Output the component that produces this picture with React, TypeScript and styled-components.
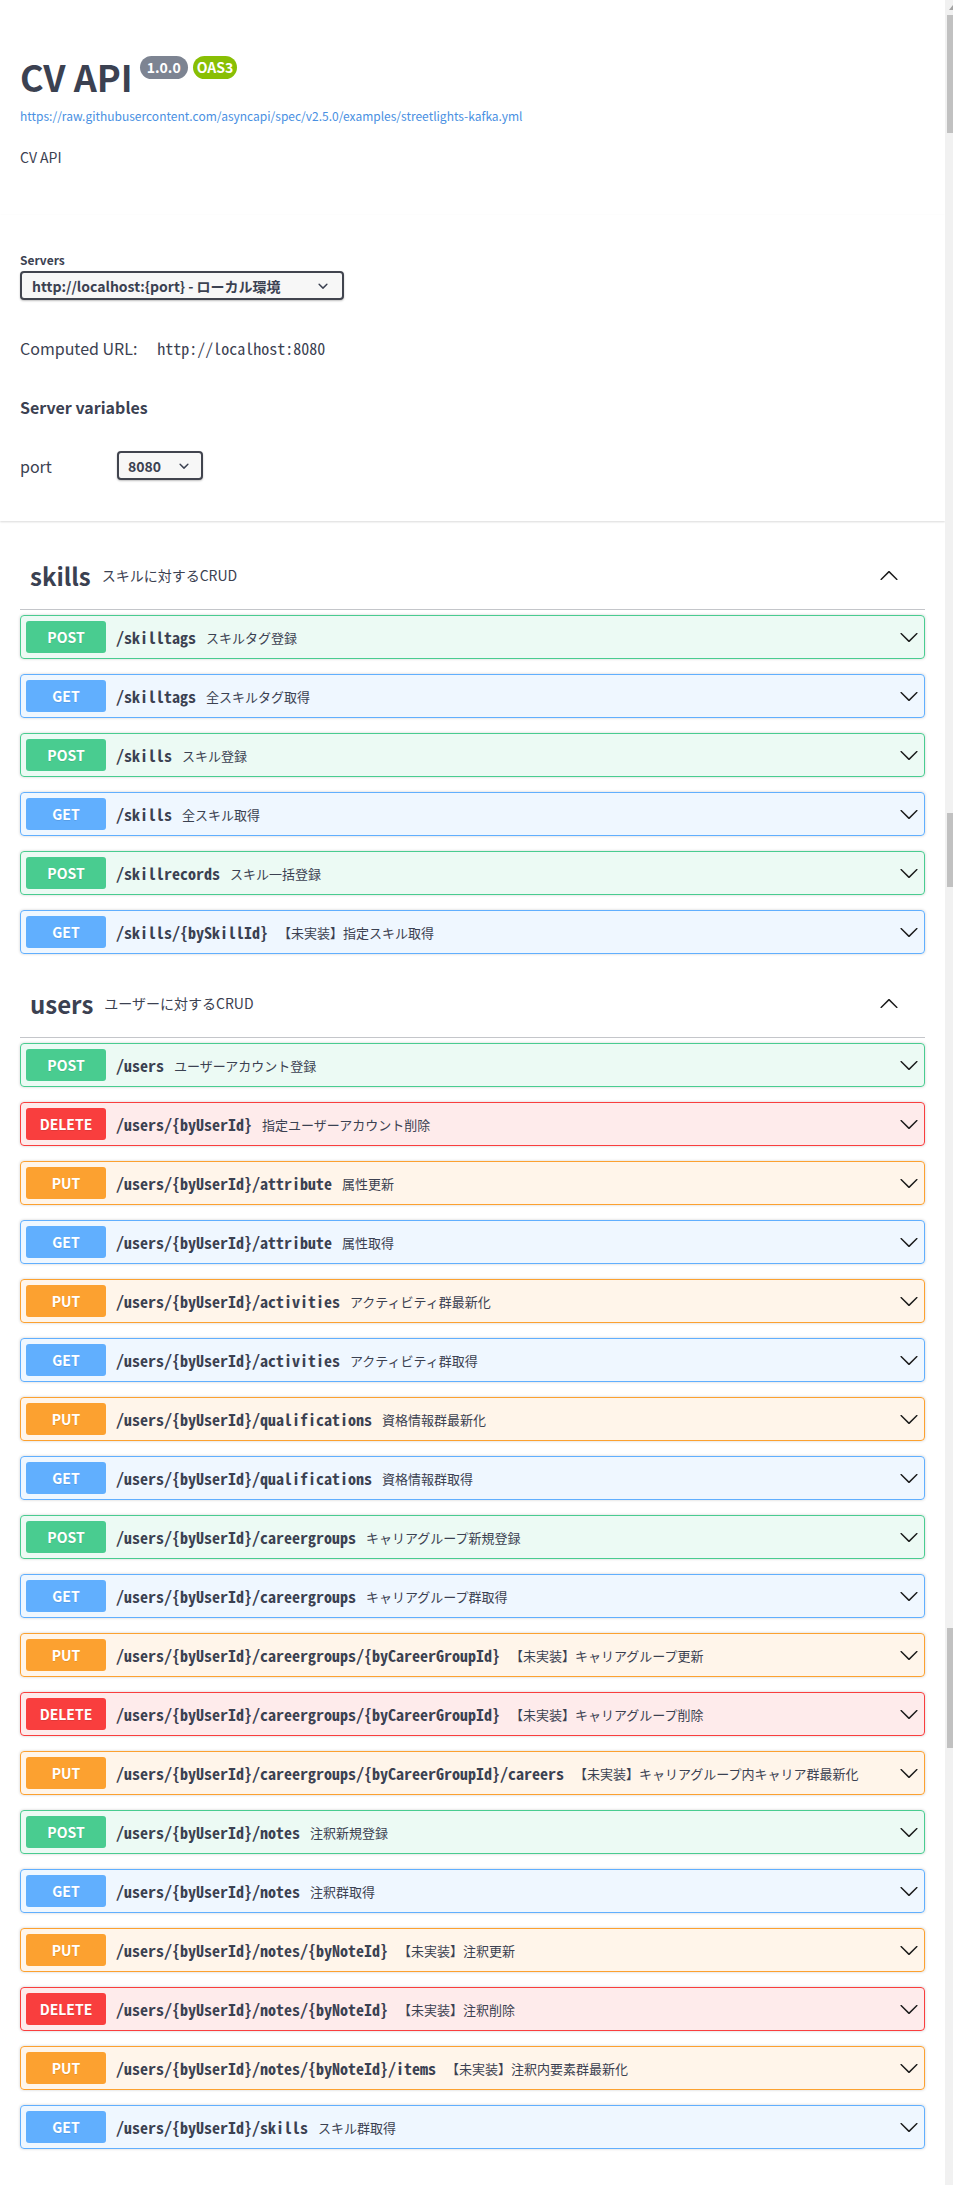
import * as React from "react";
import styled, { createGlobalStyle } from "styled-components";

const GlobalStyle = createGlobalStyle`
  html, body {
    margin: 0;
    padding: 0;
    background: #fff;
  }
  body {
    font-family: "Noto Sans CJK JP", "Noto Sans", sans-serif;
    color: #3b4151;
  }
  * {
    box-sizing: border-box;
  }
`;

const mono = `"Noto Sans Mono CJK JP", "DejaVu Sans Mono", monospace`;

const methodColors: Record<string, string> = {
  POST: "73, 204, 144",
  GET: "97, 175, 254",
  PUT: "252, 161, 48",
  DELETE: "249, 62, 62",
};

const Page = styled.div`
  display: flex;
  min-height: 2185px;
`;

const Main = styled.main`
  flex: 1;
  min-width: 0;
`;

const ScrollTrack = styled.div`
  flex: none;
  width: 8px;
  background: #f1f1f1;
  display: flex;
  flex-direction: column;
  align-items: flex-end;
`;

const ScrollArrow = styled.div`
  margin: 5px 0 0;
  width: 0;
  height: 0;
  border-left: 4px solid transparent;
  border-bottom: 5px solid #a3a3a3;
`;

const ScrollThumb = styled.div<{ $gap: number; $size: number }>`
  width: 6px;
  margin-top: ${props => props.$gap}px;
  height: ${props => props.$size}px;
  background: #c1c1c1;
`;

const Wrapper = styled.div`
  padding: 0 20px;
`;

const Info = styled.div`
  margin: 50px 0 48px;
`;

const TitleRow = styled.div`
  display: flex;
  align-items: flex-start;
`;

const Title = styled.h2`
  margin: 0;
  font-size: 36px;
  font-weight: 700;
  line-height: 52px;
  color: #3b4151;
`;

const Badge = styled.span<{ $bg: string; $gap: number; $pad: number }>`
  margin: 6px 0 0 ${props => props.$gap}px;
  height: 23px;
  padding: 0 ${props => props.$pad}px;
  border-radius: 57px;
  background: ${props => props.$bg};
  color: #fff;
  font-size: 14px;
  font-weight: 700;
  line-height: 23px;
`;

const SpecLink = styled.a`
  display: block;
  margin-top: 5px;
  font-size: 12px;
  line-height: 17px;
  color: #4990e2;
  text-decoration: none;
`;

const Description = styled.p`
  margin: 23px 0 0;
  font-size: 14px;
  line-height: 20px;
`;

const SchemeContainer = styled.section`
  background: #fff;
  box-shadow: 0 1px 2px 0 rgba(0, 0, 0, 0.15);
  padding: 36px 0 41px;
`;

const ServersLabel = styled.span`
  display: block;
  font-size: 12px;
  font-weight: 700;
  line-height: 17px;
`;

const SelectBox = styled.div<{ $width: number; $left: number; $right: number }>`
  display: flex;
  align-items: center;
  justify-content: space-between;
  width: ${props => props.$width}px;
  height: 29px;
  padding: 0 ${props => props.$right}px 0 ${props => props.$left}px;
  border: 2px solid #41444e;
  border-radius: 4px;
  background: #f7f7f7;
  box-shadow: 0 1px 2px 0 rgba(0, 0, 0, 0.25);
  font-size: 14px;
  font-weight: 700;
  color: #3b4151;
  white-space: nowrap;
`;

const ServerSelect = styled(SelectBox)`
  margin-top: 3px;
`;

const ComputedRow = styled.div`
  display: flex;
  align-items: baseline;
  gap: 20px;
  margin-top: 36px;
  font-size: 16px;
  line-height: 24px;
`;

const Code = styled.code`
  font-family: ${mono};
  font-size: 16px;
`;

const VarsTitle = styled.h4`
  margin: 36px 0 0;
  font-size: 16px;
  font-weight: 700;
  line-height: 23px;
`;

const VarRow = styled.div`
  display: flex;
  align-items: center;
  margin-top: 32px;
  height: 29px;
`;

const VarName = styled.span`
  width: 97px;
  font-size: 16px;
`;

const Operations = styled.div`
  margin-top: 20px;
  padding: 0 20px;
`;

const TagHeader = styled.div`
  display: flex;
  align-items: center;
  height: 69px;
  padding: 0 26px 0 10px;
  margin-bottom: 5px;
  border-bottom: 1px solid rgba(59, 65, 81, 0.3);
`;

const TagName = styled.h3`
  margin: 0;
  font-size: 24px;
  font-weight: 700;
  line-height: 35px;
  color: #3b4151;
`;

const TagDesc = styled.small`
  flex: 1;
  padding-left: 11px;
  font-size: 14px;
  line-height: 20px;
`;

const Opblock = styled.div<{ $rgb: string }>`
  display: flex;
  align-items: center;
  height: 44px;
  padding: 0 5px;
  margin-bottom: 15px;
  border: 1px solid rgb(${props => props.$rgb});
  border-radius: 4px;
  background: rgba(${props => props.$rgb}, 0.1);
  box-shadow: 0 0 3px rgba(0, 0, 0, 0.19);
`;

const Method = styled.span<{ $rgb: string }>`
  flex: none;
  min-width: 80px;
  height: 32px;
  border-radius: 3px;
  background: rgb(${props => props.$rgb});
  color: #fff;
  font-size: 14px;
  font-weight: 700;
  line-height: 32px;
  text-align: center;
  text-shadow: 0 1px 0 rgba(0, 0, 0, 0.1);
`;

const Path = styled.span`
  padding: 0 10px;
  font-family: ${mono};
  font-size: 16px;
  font-weight: 700;
  color: #3b4151;
  white-space: nowrap;
`;

const OpDesc = styled.span`
  flex: 1;
  font-size: 13px;
  color: #3b4151;
  white-space: nowrap;
`;

const Arrow = styled.svg`
  flex: none;
  width: 20px;
  height: 20px;
  fill: #1b1b1b;
`;

const SmallChevron = () => (
  <svg width="20" height="20" viewBox="0 0 20 20" fill="#3b4151">
    <path d="M13.418 7.859a.695.695 0 01.978 0 .68.68 0 010 .969l-3.908 3.83a.697.697 0 01-.979 0l-3.908-3.830a.68.68 0 010-.969.695.695 0 01.978 0L10 11l3.418-3.141z" />
  </svg>
);

const ArrowDown = () => (
  <Arrow viewBox="0 0 20 20">
    <path d="M17.418 6.109c.272-.268.709-.268.979 0s.271.701 0 .969l-7.908 7.830c-.27.268-.707.268-.979 0l-7.908-7.830c-.27-.268-.27-.701 0-.969.271-.268.709-.268.979 0L10 13.25l7.418-7.141z" />
  </Arrow>
);

const ArrowUp = () => (
  <Arrow viewBox="0 0 20 20">
    <path d="M17.418 14.908c.272.268.709.268.979 0s.271-.701 0-.969l-7.908-7.830c-.27-.268-.707-.268-.979 0l-7.908 7.830c-.27.268-.27.701 0 .969.271.268.709.268.979 0L10 7.767l7.418 7.141z" />
  </Arrow>
);

type Op = [string, string, string];

const tags: { name: string; desc: string; ops: Op[] }[] = [
  {
    name: "skills",
    desc: "スキルに対するCRUD",
    ops: [
      ["POST", "/skilltags", "スキルタグ登録"],
      ["GET", "/skilltags", "全スキルタグ取得"],
      ["POST", "/skills", "スキル登録"],
      ["GET", "/skills", "全スキル取得"],
      ["POST", "/skillrecords", "スキル一括登録"],
      ["GET", "/skills/{bySkillId}", "【未実装】指定スキル取得"],
    ],
  },
  {
    name: "users",
    desc: "ユーザーに対するCRUD",
    ops: [
      ["POST", "/users", "ユーザーアカウント登録"],
      ["DELETE", "/users/{byUserId}", "指定ユーザーアカウント削除"],
      ["PUT", "/users/{byUserId}/attribute", "属性更新"],
      ["GET", "/users/{byUserId}/attribute", "属性取得"],
      ["PUT", "/users/{byUserId}/activities", "アクティビティ群最新化"],
      ["GET", "/users/{byUserId}/activities", "アクティビティ群取得"],
      ["PUT", "/users/{byUserId}/qualifications", "資格情報群最新化"],
      ["GET", "/users/{byUserId}/qualifications", "資格情報群取得"],
      ["POST", "/users/{byUserId}/careergroups", "キャリアグループ新規登録"],
      ["GET", "/users/{byUserId}/careergroups", "キャリアグループ群取得"],
      ["PUT", "/users/{byUserId}/careergroups/{byCareerGroupId}", "【未実装】キャリアグループ更新"],
      ["DELETE", "/users/{byUserId}/careergroups/{byCareerGroupId}", "【未実装】キャリアグループ削除"],
      ["PUT", "/users/{byUserId}/careergroups/{byCareerGroupId}/careers", "【未実装】キャリアグループ内キャリア群最新化"],
      ["POST", "/users/{byUserId}/notes", "注釈新規登録"],
      ["GET", "/users/{byUserId}/notes", "注釈群取得"],
      ["PUT", "/users/{byUserId}/notes/{byNoteId}", "【未実装】注釈更新"],
      ["DELETE", "/users/{byUserId}/notes/{byNoteId}", "【未実装】注釈削除"],
      ["PUT", "/users/{byUserId}/notes/{byNoteId}/items", "【未実装】注釈内要素群最新化"],
      ["GET", "/users/{byUserId}/skills", "スキル群取得"],
    ],
  },
];

export default function App() {
  return (
    <Page>
      <GlobalStyle />
      <Main>
        <Wrapper>
          <Info>
            <TitleRow>
              <Title>CV API</Title>
              <Badge $bg="#7d8492" $gap={7} $pad={7}>1.0.0</Badge>
              <Badge $bg="#89bf04" $gap={5} $pad={4}>OAS3</Badge>
            </TitleRow>
            <SpecLink href="#">
              https://raw.githubusercontent.com/asyncapi/spec/v2.5.0/examples/streetlights-kafka.yml
            </SpecLink>
            <Description>CV API</Description>
          </Info>
        </Wrapper>

        <SchemeContainer>
          <Wrapper>
            <ServersLabel>Servers</ServersLabel>
            <ServerSelect $width={324} $left={10} $right={9}>
              <span>http://localhost:{"{port}"} - ローカル環境</span>
              <SmallChevron />
            </ServerSelect>
            <ComputedRow>
              <span>Computed URL:</span>
              <Code>http://localhost:8080</Code>
            </ComputedRow>
            <VarsTitle>Server variables</VarsTitle>
            <VarRow>
              <VarName>port</VarName>
              <SelectBox $width={86} $left={9} $right={7}>
                <span>8080</span>
                <SmallChevron />
              </SelectBox>
            </VarRow>
          </Wrapper>
        </SchemeContainer>

        <Operations>
          {tags.map(tag => (
            <section key={tag.name}>
              <TagHeader>
                <TagName>{tag.name}</TagName>
                <TagDesc>{tag.desc}</TagDesc>
                <ArrowUp />
              </TagHeader>
              {tag.ops.map(([method, path, desc]) => (
                <Opblock key={method + path} $rgb={methodColors[method]}>
                  <Method $rgb={methodColors[method]}>{method}</Method>
                  <Path>{path}</Path>
                  <OpDesc>{desc}</OpDesc>
                  <ArrowDown />
                </Opblock>
              ))}
            </section>
          ))}
        </Operations>
      </Main>
      <ScrollTrack>
        <ScrollArrow />
        <ScrollThumb $gap={5} $size={118} />
        <ScrollThumb $gap={680} $size={74} />
        <ScrollThumb $gap={741} $size={120} />
      </ScrollTrack>
    </Page>
  );
}
